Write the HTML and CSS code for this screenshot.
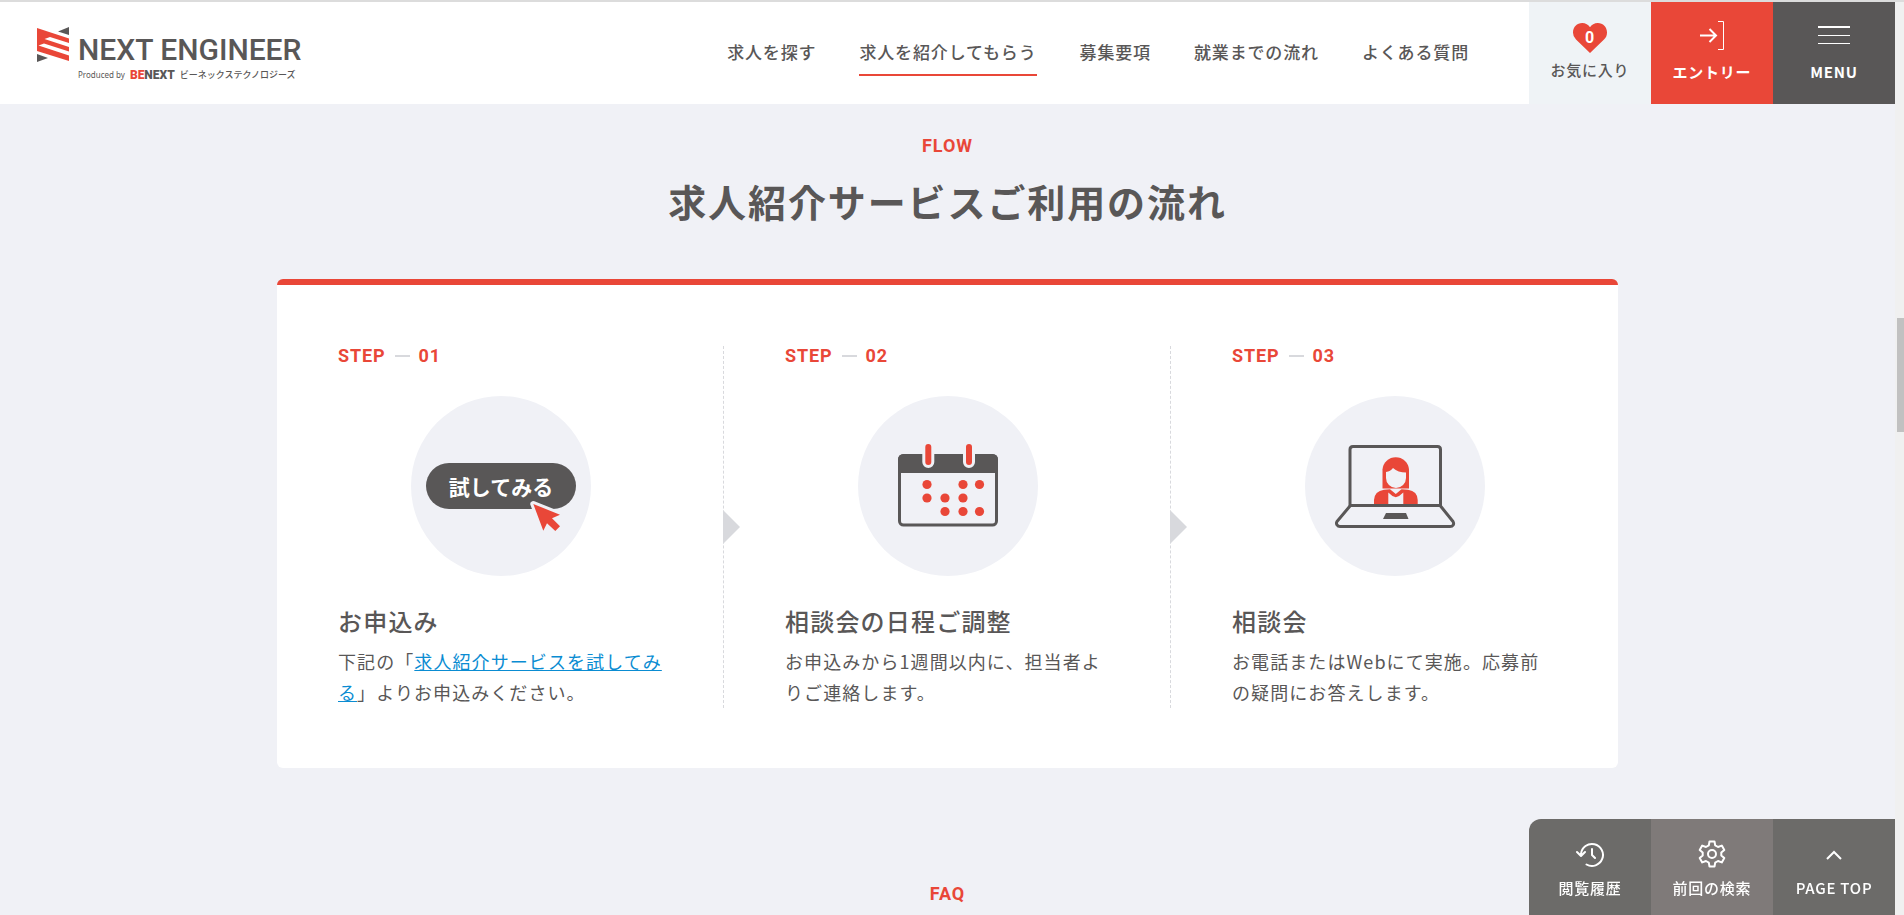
FILE: index.html
```html
<!DOCTYPE html>
<html lang="ja">
<head>
<meta charset="utf-8">
<title>NEXT ENGINEER</title>
<link rel="stylesheet" href="styles.css">
</head>
<body>
<div class="page">
  <header class="header">
    <a class="logo" href="#">
      <svg class="logo-mark" width="32" height="36" viewBox="0 0 32 36" aria-hidden="true">
        <path fill="#e94738" d="M0 1L32 11.500V34L0 24z"/>
        <path fill="#fff" d="M7.500 12L13 10 32 16V20zM1.500 18.500L7 16.500 32 24.500V28.500z"/>
        <path fill="#595757" d="M32 0V8L21 4.500zM0 27L11 31 0 35z"/>
      </svg>
      <span class="logo-text">
        <span class="logo-name">NEXT ENGINEER</span>
        <span class="logo-sub">
          <span class="logo-by">Produced by</span>
          <span class="logo-brand"><em>BE</em>NEXT</span>
          <span class="logo-kana">ビーネックステクノロジーズ</span>
        </span>
      </span>
    </a>
    <nav class="nav">
      <a href="#">求人を探す</a>
      <a class="is-current" href="#">求人を紹介してもらう</a>
      <a href="#">募集要項</a>
      <a href="#">就業までの流れ</a>
      <a href="#">よくある質問</a>
    </nav>
    <div class="actions">
      <a class="action favorite" href="#">
        <svg width="34" height="30" viewBox="0 0 34 30" aria-hidden="true">
          <path fill="#e94738" d="M17 30L3 16.500A9.500 9.500 0 0 1 0 9.500C0 4 4 0 9.200 0 12.500 0 15.500 1.700 17 4.300 18.500 1.700 21.500 0 24.800 0 30 0 34 4 34 9.500 34 12.500 33 14.800 31 16.500z"/>
          <text class="heart-count" x="17" y="20" text-anchor="middle">0</text>
        </svg>
        <span>お気に入り</span>
      </a>
      <a class="action entry" href="#">
        <svg width="24" height="30" viewBox="0 0 24 30" fill="none" stroke="#fff" aria-hidden="true">
          <path stroke-width="2" d="M0 14.500H16M9.500 8L16 14.500 9.500 21"/>
          <path d="M18 .500H23.500V28.500H18"/>
        </svg>
        <span>エントリー</span>
      </a>
      <button class="action menu" type="button">
        <svg width="32" height="30" viewBox="0 0 32 30" fill="#fff" aria-hidden="true">
          <path d="M0 5H32V7H0zM0 14H32V15H0zM0 22H32V23H0z"/>
        </svg>
        <span>MENU</span>
      </button>
    </div>
  </header>

  <main class="main">
    <section class="section">
      <p class="eyebrow">FLOW</p>
      <h2 class="heading">求人紹介サービスご利用の流れ</h2>
      <ol class="steps">
        <li class="step">
          <div class="step-label"><span>STEP</span><i></i><span>01</span></div>
          <svg class="step-figure" viewBox="0 0 180 180" aria-hidden="true">
            <circle cx="90" cy="90" r="90" fill="#f0f1f6"/>
            <rect x="15" y="67" width="150" height="46" rx="23" fill="#595757"/>
            <text class="pill-text" x="90" y="99" text-anchor="middle">試してみる</text>
            <path d="M122.300 108L149 118.700 141 122.300 149 130.300 144.300 135 136 127.300 132.300 134.700z" fill="#e94738" stroke="#f0f1f6" stroke-width="6" stroke-linejoin="round" paint-order="stroke"/>
          </svg>
          <h3 class="step-title">お申込み</h3>
          <p class="step-text">下記の「<a href="#">求人紹介サービスを試してみる</a>」よりお申込みください。</p>
        </li>
        <li class="step">
          <div class="step-label"><span>STEP</span><i></i><span>02</span></div>
          <svg class="step-figure" viewBox="0 0 180 180" aria-hidden="true">
            <circle cx="90" cy="90" r="90" fill="#f0f1f6"/>
            <rect x="41.500" y="59.500" width="97" height="69.500" rx="4" fill="none" stroke="#595757" stroke-width="3"/>
            <path fill="#595757" d="M40 77V64Q40 58 46 58H134Q140 58 140 64V77z"/>
            <path d="M70.300 50V66M111 50V66" fill="none" stroke="#f0f1f6" stroke-width="12" stroke-linecap="round"/>
            <path d="M70.300 51V66M111 51V66" fill="none" stroke="#e94738" stroke-width="6" stroke-linecap="round"/>
            <g fill="#e94738">
              <circle cx="69" cy="88.500" r="4.600"/><circle cx="105" cy="88.500" r="4.600"/><circle cx="121.500" cy="88.500" r="4.600"/>
              <circle cx="69" cy="102" r="4.600"/><circle cx="87" cy="102" r="4.600"/><circle cx="105" cy="102" r="4.600"/>
              <circle cx="87" cy="115.500" r="4.600"/><circle cx="105" cy="115.500" r="4.600"/><circle cx="121.500" cy="115.500" r="4.600"/>
            </g>
          </svg>
          <h3 class="step-title">相談会の日程ご調整</h3>
          <p class="step-text">お申込みから1週間以内に、担当者よりご連絡します。</p>
        </li>
        <li class="step">
          <div class="step-label"><span>STEP</span><i></i><span>03</span></div>
          <svg class="step-figure" viewBox="0 0 180 180" aria-hidden="true">
            <circle cx="90" cy="90" r="90" fill="#f0f1f6"/>
            <path fill="#e94738" d="M77.500 92.500V73.500A13.300 13.300 0 0 1 104 73.500V92.500z"/>
            <path fill="#f0f1f6" d="M81 76Q85.500 75.500 88 72 93 76.500 101 76.500V82A10 10 0 0 1 81 82z"/>
            <path fill="#e94738" d="M69 108V104Q69.500 95 79 93.700L85 93.300 90.800 98 96.500 93.300 103 93.700Q112.500 95 112.700 104V108z"/>
            <path fill="#f0f1f6" d="M83.300 108V96.500Q87 100.500 90.800 101.200 94.500 100.500 98.300 96.500V108z"/>
            <g fill="none" stroke="#595757" stroke-width="3" stroke-linejoin="round">
              <path d="M45 109.500V53.500Q45 50.500 48 50.500H132.500Q135.500 50.500 135.500 53.500V109.500z"/>
              <path d="M45 110L32 125.500C30.500 128 32.500 130.500 35 130.500H145C148 130.500 149.500 128 148 125.500L135.500 110"/>
            </g>
            <path fill="#595757" d="M81 117H101L103.500 123H78z"/>
          </svg>
          <h3 class="step-title">相談会</h3>
          <p class="step-text">お電話またはWebにて実施。応募前の疑問にお答えします。</p>
        </li>
      </ol>
    </section>
    <section class="section section-faq">
      <p class="eyebrow">FAQ</p>
    </section>
  </main>

  <aside class="dock">
    <a href="#">
      <svg width="28" height="28" viewBox="0 0 28 28" fill="none" stroke="#fff" stroke-width="2" stroke-linecap="round" stroke-linejoin="round" aria-hidden="true">
        <path d="M5 14A11 11 0 1 1 10.500 24.500M1 12L5 16 9 12M16 9V15L19 18"/>
      </svg>
      <span>閲覧履歴</span>
    </a>
    <a class="dock-search" href="#">
      <svg width="28" height="28" viewBox="0 0 28 28" fill="none" stroke="#fff" stroke-width="2" stroke-linejoin="round" aria-hidden="true">
        <path d="M11.500 1.500H16.500L17.200 5.400 20 7 23.800 5.600 26.300 9.900 23.300 12.500V15.500L26.300 18.100 23.800 22.400 20 21 17.200 22.600 16.500 26.500H11.500L10.800 22.600 8 21 4.200 22.400 1.700 18.100 4.700 15.500V12.500L1.700 9.900 4.200 5.600 8 7 10.800 5.400z"/>
        <circle cx="14" cy="14" r="4"/>
      </svg>
      <span>前回の検索</span>
    </a>
    <a href="#">
      <svg width="28" height="28" viewBox="0 0 28 28" fill="none" stroke="#fff" stroke-width="2" aria-hidden="true">
        <path d="M7 19L14 12 21 19"/>
      </svg>
      <span>PAGE TOP</span>
    </a>
  </aside>
</div>
<div class="scrollbar" aria-hidden="true"><i class="thumb"></i></div>
</body>
</html>
```
FILE: styles.css
```css
* {
  box-sizing: border-box;
}

body {
  margin: 0;
  display: flex;
  height: 100vh;
  overflow: hidden;
  background: #f0f1f6;
  color: #595757;
  font-family: "Noto Sans CJK JP", sans-serif;
}

a {
  color: inherit;
  text-decoration: none;
}

.nav,
.action,
.eyebrow,
.heading,
.step-label,
.step-title,
.dock {
  letter-spacing: 0.05em;
}

.page {
  flex: 1;
  min-width: 0;
  border-top: 2px solid #dcdcdc;
}

.header {
  display: flex;
  align-items: stretch;
  background: #fff;
}

.logo {
  display: flex;
  gap: 9px;
  padding: 25px 0 0 37px;
}

.logo-text {
  display: flex;
  flex-direction: column;
  gap: 3px;
  padding-top: 8px;
  white-space: nowrap;
}

.logo-name {
  font: 500 30px/30px Roboto, sans-serif;
}

.logo-sub {
  display: flex;
  align-items: center;
  gap: 5px;
  line-height: 14px;
}

.logo-by {
  font-family: "Noto Sans", sans-serif;
  font-size: 8px;
}

.logo-brand {
  font: 900 12px/14px Roboto, sans-serif;
}

.logo-brand em {
  color: #e94738;
  font-style: normal;
}

.logo-kana {
  font-size: 9px;
  font-weight: 500;
}

.nav {
  display: flex;
  align-items: center;
  gap: 43px;
  margin-left: auto;
  padding-right: 60px;
  font-size: 17px;
  font-weight: 500;
  line-height: 24px;
  white-space: nowrap;
}

.nav a {
  padding: 10px 0;
  border-bottom: 2px solid transparent;
}

.nav .is-current {
  border-color: #e94738;
}

.actions {
  display: flex;
}

.action {
  display: flex;
  flex-direction: column;
  align-items: center;
  gap: 9px;
  width: 122px;
  height: 102px;
  padding: 19px 0 0;
  border: 0;
  color: #fff;
  font: 700 15px/24px "Noto Sans CJK JP", sans-serif;
}

.favorite {
  gap: 5px;
  padding-top: 21px;
  background: #eff3f6;
  color: #595757;
  font-weight: 500;
}

.heart-count {
  fill: #fff;
  font: 700 16px Roboto, sans-serif;
}

.entry {
  background: #e94738;
}

.menu {
  background: #595757;
}

.section {
  padding: 29px 20px 0;
  text-align: center;
}

.section-faq {
  padding-top: 113px;
}

.eyebrow {
  margin: 0;
  color: #e94738;
  font: 700 18px/26px Roboto, sans-serif;
}

.heading {
  margin: 14px 0 50px;
  font-size: 38px;
  font-weight: 700;
  line-height: 56px;
}

.steps {
  display: grid;
  grid-template-columns: repeat(3, 1fr);
  max-width: 1341px;
  margin: 0 auto;
  padding: 61px 0 60px;
  border-top: 6px solid #e94738;
  border-radius: 6px;
  background: #fff;
  list-style: none;
  text-align: left;
}

.step {
  position: relative;
  padding: 0 61px;
}

.step + .step::before {
  content: "";
  position: absolute;
  top: 0;
  bottom: 0;
  left: -1px;
  border-left: 1px dashed #d8d9dd;
}

.step + .step::after {
  content: "";
  position: absolute;
  top: 50%;
  left: -1px;
  width: 17px;
  height: 34px;
  margin-top: -17px;
  background: #d8d9dd;
  clip-path: polygon(0 0, 100% 50%, 0 100%);
}

.step-label {
  display: flex;
  align-items: center;
  gap: 9px;
  color: #e94738;
  font: 700 18px/20px Roboto, sans-serif;
}

.step-label i {
  width: 15px;
  height: 2px;
  background: #d8d9dd;
}

.step-figure {
  display: block;
  width: 180px;
  margin: 30px auto 26px;
}

.pill-text {
  fill: #fff;
  font: 700 21px "Noto Sans CJK JP", sans-serif;
}

.step-title {
  margin: 0 0 6px;
  font-size: 24px;
  font-weight: 500;
  line-height: 38px;
}

.step-text {
  margin: 0;
  font-size: 18px;
  line-height: 31px;
  letter-spacing: 0.06em;
}

.step-text a {
  color: #0a8cd2;
  text-decoration: underline;
}

.dock {
  position: fixed;
  right: 9px;
  bottom: 0;
  display: flex;
  overflow: hidden;
  border-radius: 12px 0 0 0;
  color: #fff;
  font-size: 15px;
  font-weight: 500;
  line-height: 24px;
}

.dock a {
  display: flex;
  flex-direction: column;
  align-items: center;
  gap: 8px;
  width: 122px;
  padding: 21px 0 15px;
  background: #6c6b69;
}

.dock .dock-search {
  background: #7f7a79;
}

.scrollbar {
  width: 9px;
  padding: 316px 0 0 2px;
  border-top: 2px solid #dcdcdc;
  background: #f0f0f0;
}

.thumb {
  display: block;
  height: 114px;
  background: #c1c1c1;
}
```
